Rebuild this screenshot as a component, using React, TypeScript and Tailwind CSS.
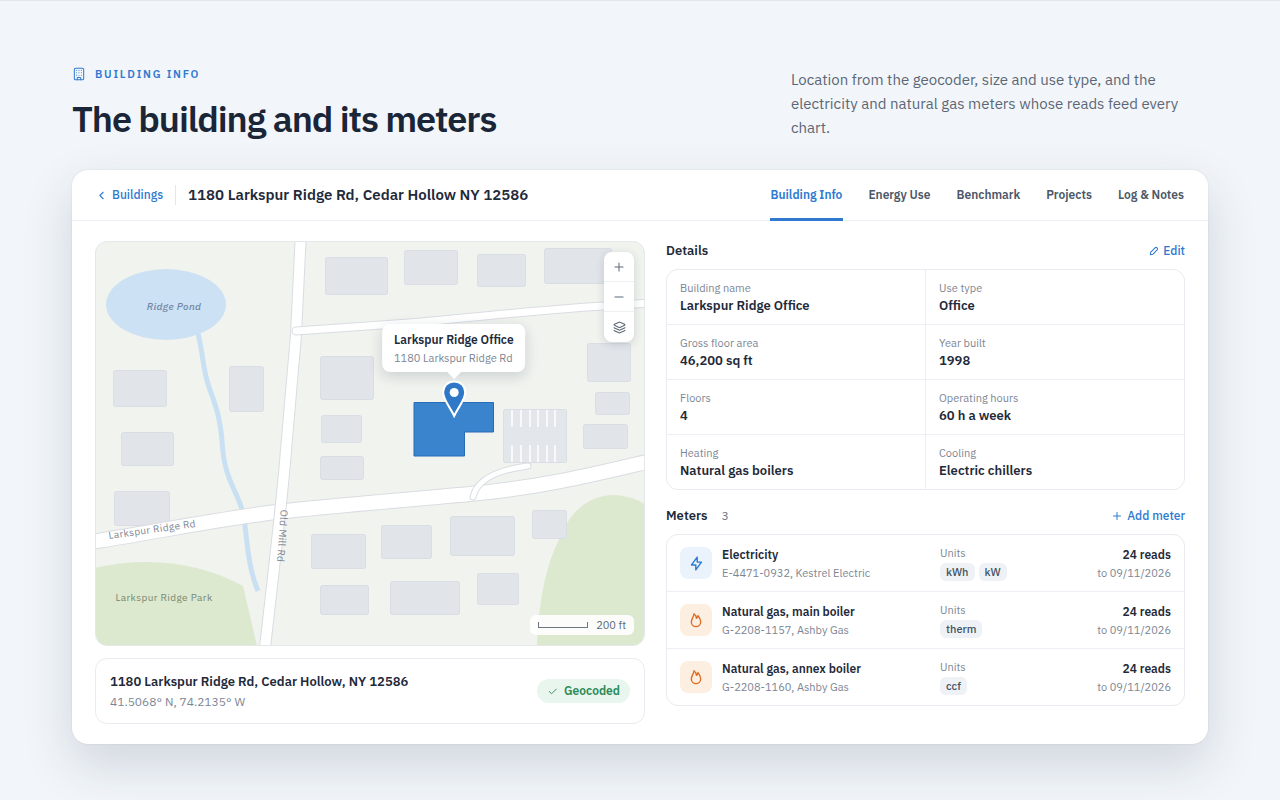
import { ReactNode } from 'react'
import { TbBolt, TbCheck, TbChevronLeft, TbMinus, TbPlus } from 'react-icons/tb'
import { Building, Layers } from 'lucide-react'

type Meter = {
  name: string
  account: string
  kind: 'electric' | 'gas'
  units: string[]
  reads: number
  lastRead: string
}

const tabs = ['Building Info', 'Energy Use', 'Benchmark', 'Projects', 'Log & Notes']

const details = [
  { label: 'Building name', value: 'Larkspur Ridge Office' },
  { label: 'Use type', value: 'Office' },
  { label: 'Gross floor area', value: '46,200 sq ft' },
  { label: 'Year built', value: '1998' },
  { label: 'Floors', value: '4' },
  { label: 'Operating hours', value: '60 h a week' },
  { label: 'Heating', value: 'Natural gas boilers' },
  { label: 'Cooling', value: 'Electric chillers' },
]

const meters: Meter[] = [
  { name: 'Electricity', account: 'E-4471-0932, Kestrel Electric', kind: 'electric', units: ['kWh', 'kW'], reads: 24, lastRead: '09/11/2026' },
  { name: 'Natural gas, main boiler', account: 'G-2208-1157, Ashby Gas', kind: 'gas', units: ['therm'], reads: 24, lastRead: '09/11/2026' },
  { name: 'Natural gas, annex boiler', account: 'G-2208-1160, Ashby Gas', kind: 'gas', units: ['ccf'], reads: 24, lastRead: '09/11/2026' },
]

// x, y, width, height
const footprints = [
  [230, 16, 63, 38], [309, 9, 54, 35], [382, 13, 49, 33], [449, 7, 68, 36],
  [18, 129, 54, 37], [134, 125, 35, 46], [225, 115, 54, 44], [26, 191, 53, 34],
  [226, 174, 41, 28], [492, 102, 44, 39], [500, 151, 35, 23], [488, 183, 45, 25],
  [19, 250, 56, 35], [225, 215, 44, 24], [216, 293, 55, 35], [225, 344, 49, 30],
  [286, 284, 51, 34], [355, 275, 65, 40], [437, 269, 35, 29], [295, 340, 70, 34],
  [382, 332, 42, 32],
]

const stalls = [417, 426, 435, 443, 452, 460]

const roads = [
  { d: 'M-10 302C60 291 130 277 182 271S300 260 375 253S500 233 560 219', width: 14 },
  { d: 'M206 -10L201 94L191 209C188 250 180 320 169 415', width: 10 },
  { d: 'M201 90L300 83C380 77 460 66 560 62', width: 7 },
  { d: 'M378 256C382 238 402 229 433 225', width: 5 },
]

function Map() {
  return (
    <div className="relative overflow-hidden rounded-xl border border-[#e4e8ea] bg-[#f0f3ee]">
      <svg viewBox="1 1 548 403" className="block w-full" role="img" aria-label="Map of Larkspur Ridge Office">
        <path d="M0 327C50 315 105 321 148 345L162 405H0Z" fill="#dce9cf" />
        <path d="M442 405C444 350 455 315 464 299C474 272 492 254 520 254C532 255 542 258 550 263V405Z" fill="#dce9cf" />
        <path d="M103 92C109 118 108 130 114 146C120 163 125 175 127 200C129 240 143 250 148 272C152 292 152 325 163 350" fill="none" stroke="#c9e0f3" strokeWidth="5" />
        <ellipse cx="71" cy="63.500" rx="60" ry="35.500" fill="#cde1f4" />
        {footprints.map(([x, y, w, h]) => (
          <rect key={`${x}-${y}`} x={x + 0.5} y={y + 0.5} width={w - 1} height={h - 1} rx="2" fill="#e1e5ea" stroke="#d9dde5" />
        ))}
        <rect x="408.500" y="168.500" width="63" height="53" rx="2" fill="#e3e7ec" stroke="#d9dde5" />
        {stalls.map((x) => (
          <path key={x} d={`M${x} 169V186M${x} 204V221`} stroke="#fff" strokeWidth="1.500" />
        ))}
        {roads.map((road) => (
          <g key={road.d} fill="none" strokeLinecap="round">
            <path d={road.d} stroke="#dadce3" strokeWidth={road.width + 2} />
            <path d={road.d} stroke="#fff" strokeWidth={road.width} />
          </g>
        ))}
        <path d="M319 161.500H398.500V191H369.500V215H319Z" fill="#3a83cd" stroke="#2a6bb8" />
        <g fontSize="10" fill="#7b848f" textAnchor="middle" letterSpacing="0.4">
          <text x="79" y="69" fontStyle="italic" fontWeight="500" fill="#6f88a8">Ridge Pond</text>
          <text x="57" y="292" transform="rotate(-8 57 288)">Larkspur Ridge Rd</text>
          <text x="188" y="299" transform="rotate(94 188 295)">Old Mill Rd</text>
          <text x="69" y="360" fill="#78876f">Larkspur Ridge Park</text>
        </g>
      </svg>

      {/* Callout, its tip sits on the building */}
      <div className="absolute left-[65.3%] top-[43.6%] flex -translate-x-1/2 -translate-y-full flex-col items-center">
        <div className="whitespace-nowrap rounded-lg bg-white px-3 py-[6px] shadow-[0_4px_14px_rgba(30,45,70,0.18)]">
          <p className="text-xs/5 font-semibold text-[#1f2a3a]">Larkspur Ridge Office</p>
          <p className="text-[11px] leading-4 text-[#7c8694]">1180 Larkspur Ridge Rd</p>
        </div>
        <svg width="14" height="7" viewBox="0 0 14 7" fill="#fff">
          <path d="M0 0H14L7 7Z" />
        </svg>
        <svg width="26" height="38" viewBox="0 0 26 38" className="mt-px">
          <path d="M13 1.500C6.600 1.500 2 6.300 2 12.300C2 20 9 27 13 36C17 27 24 20 24 12.300C24 6.300 19.400 1.500 13 1.500Z" fill="#2f78c8" stroke="#fff" strokeWidth="2" />
          <circle cx="13" cy="12.500" r="4.500" fill="#fff" />
        </svg>
      </div>

      <div className="absolute right-[10px] top-[10px] flex flex-col divide-y divide-[#edf0f3] rounded-lg bg-white text-[#5d6878] shadow-[0_2px_8px_rgba(30,45,70,0.16)]">
        <button aria-label="Zoom in" className="grid size-[30px] place-items-center"><TbPlus size={14} strokeWidth={1.75} /></button>
        <button aria-label="Zoom out" className="grid size-[30px] place-items-center"><TbMinus size={14} strokeWidth={1.75} /></button>
        <button aria-label="Layers" className="grid size-[30px] place-items-center"><Layers size={13} strokeWidth={2} /></button>
      </div>

      <div className="absolute bottom-[10px] right-[10px] flex items-center gap-2 rounded-md bg-white/90 px-2 text-[11px] leading-5 text-[#5d6878]">
        <span className="h-[6px] w-[50px] border-x border-b border-[#6b7583]" />
        200 ft
      </div>
    </div>
  )
}

function SectionHeader({ title, count, action }: { title: string; count?: number; action: ReactNode }) {
  return (
    <div className="mb-2 flex items-center justify-between">
      <h3 className="text-[13px] font-semibold leading-5 text-[#1f2a3a]">
        {title}
        {count !== undefined && <span className="ml-[14px] text-xs font-normal text-[#6b7583]">{count}</span>}
      </h3>
      <button className="flex items-center gap-1 text-xs font-medium text-[#2f7ad0]">{action}</button>
    </div>
  )
}

function FlameIcon() {
  return (
    <svg width="16" height="16" viewBox="0 0 24 24" fill="none" stroke="currentColor" strokeWidth="2" strokeLinejoin="round">
      <path d="M9 2.500C9 7 5 10 5 15A7 7 0 0 0 19 15C19 10.500 16.500 8 15 5.500C14.800 7.500 14 8.800 12.500 9.500C12.500 6.500 11 4 9 2.500Z" />
    </svg>
  )
}

function MeterRow({ meter }: { meter: Meter }) {
  const electric = meter.kind === 'electric'
  return (
    <li className="grid grid-cols-[32px_1fr_120px_101px] items-center gap-[10px] px-[13px] py-[10px]">
      <span className={`grid size-8 place-items-center rounded-lg ${electric ? 'bg-[#eaf2fb] text-[#2f7ad0]' : 'bg-[#fdeee2] text-[#dd6b20]'}`}>
        {electric ? <TbBolt size={17} /> : <FlameIcon />}
      </span>
      <div>
        <p className="text-xs/5 font-semibold text-[#1f2a3a]">{meter.name}</p>
        <p className="text-[11px] leading-4 text-[#7c8694]">{meter.account}</p>
      </div>
      <div>
        <p className="text-[11px] leading-4 text-[#7c8694]">Units</p>
        <div className="mt-[2px] flex gap-1">
          {meter.units.map((unit) => (
            <span key={unit} className="rounded-md bg-[#eef2f6] px-[6px] text-[11px] font-medium leading-[18px] text-[#455263]">{unit}</span>
          ))}
        </div>
      </div>
      <div className="text-right">
        <p className="text-xs/5 font-semibold text-[#1f2a3a]">{meter.reads} reads</p>
        <p className="text-[11px] leading-4 text-[#7c8694]">to {meter.lastRead}</p>
      </div>
    </li>
  )
}

export default function App() {
  return (
    <main className="min-h-screen border-t border-[#e2e7ee] bg-[#f2f6fa] px-[72px] pb-14 pt-[65px] font-['IBM_Plex_Sans',Roboto,'Liberation_Sans',sans-serif] text-[#1f2a3a]">
      <header className="mb-[29px] flex items-center justify-between">
        <div>
          <p className="flex items-center gap-[9px] text-[11px] font-semibold uppercase leading-4 tracking-[0.16em] text-[#2f7ad0]">
            <Building size={14} strokeWidth={1.75} />
            Building Info
          </p>
          <h1 className="mt-[15px] text-4xl/11 font-semibold tracking-[-0.03em] text-[#1a2638]">The building and its meters</h1>
        </div>
        <p className="w-[417px] text-[15px] leading-6 text-[#5c6675]">
          Location from the geocoder, size and use type, and the electricity and natural gas meters whose reads feed every chart.
        </p>
      </header>

      <section className="rounded-2xl bg-white shadow-[0_0_2px_rgba(30,45,70,0.12),0_20px_50px_rgba(30,45,70,0.16)]">
        <div className="flex items-center justify-between border-b border-[#eceff3] px-[23px]">
          <div className="flex items-center">
            <a href="#buildings" className="flex items-center gap-1 text-xs font-medium text-[#2f7ad0]">
              <TbChevronLeft size={13} />
              Buildings
            </a>
            <span className="mx-3 h-5 w-px bg-[#e3e7ec]" />
            <h2 className="text-[15px] font-semibold">1180 Larkspur Ridge Rd, Cedar Hollow NY 12586</h2>
          </div>
          <nav className="flex gap-6">
            {tabs.map((tab, i) => (
              <a
                key={tab}
                href="#tab"
                className={`-mb-px border-b-[3px] px-px pb-[14px] pt-4 text-xs font-semibold leading-[18px] ${i === 0 ? 'border-[#2f7ad0] text-[#2f7ad0]' : 'border-transparent text-[#4c5768]'}`}
              >
                {tab}
              </a>
            ))}
          </nav>
        </div>

        <div className="grid grid-cols-[550fr_519fr] gap-[21px] px-[23px] py-5">
          <div className="flex flex-col gap-3">
            <Map />
            <div className="flex items-center justify-between rounded-xl border border-[#e8ebef] px-[14px] py-[13px]">
              <div>
                <p className="text-[13px] font-semibold leading-5">1180 Larkspur Ridge Rd, Cedar Hollow, NY 12586</p>
                <p className="mt-[2px] text-xs leading-4 text-[#7c8694]">41.5068° N, 74.2135° W</p>
              </div>
              <span className="flex items-center gap-[6px] rounded-full bg-[#e8f6ee] px-[10px] text-xs font-semibold leading-6 text-[#2a8a57]">
                <TbCheck size={11} />
                Geocoded
              </span>
            </div>
          </div>

          <div>
            <SectionHeader
              title="Details"
              action={
                <>
                  <svg width="10" height="10" viewBox="0 0 24 24" fill="none" stroke="currentColor" strokeWidth="2.500" strokeLinejoin="round">
                    <path d="M3 21l1.300-6.500L14.500 4.300a3.700 3.700 0 0 1 5.200 5.200L9.500 19.700Z" />
                  </svg>
                  Edit
                </>
              }
            />
            <dl className="grid grid-cols-2 gap-px overflow-hidden rounded-xl border border-[#e8ebef] bg-[#eceff3]">
              {details.map((item) => (
                <div key={item.label} className="bg-white px-[13px] pb-2 pt-[10px]">
                  <dt className="text-[11px] leading-4 text-[#7c8694]">{item.label}</dt>
                  <dd className="text-[13px] font-semibold leading-5">{item.value}</dd>
                </div>
              ))}
            </dl>

            <div className="mt-4">
              <SectionHeader
                title="Meters"
                count={3}
                action={
                  <>
                    <TbPlus size={12} />
                    Add meter
                  </>
                }
              />
              <ul className="divide-y divide-[#eceff3] rounded-xl border border-[#e8ebef]">
                {meters.map((meter) => (
                  <MeterRow key={meter.account} meter={meter} />
                ))}
              </ul>
            </div>
          </div>
        </div>
      </section>
    </main>
  )
}
